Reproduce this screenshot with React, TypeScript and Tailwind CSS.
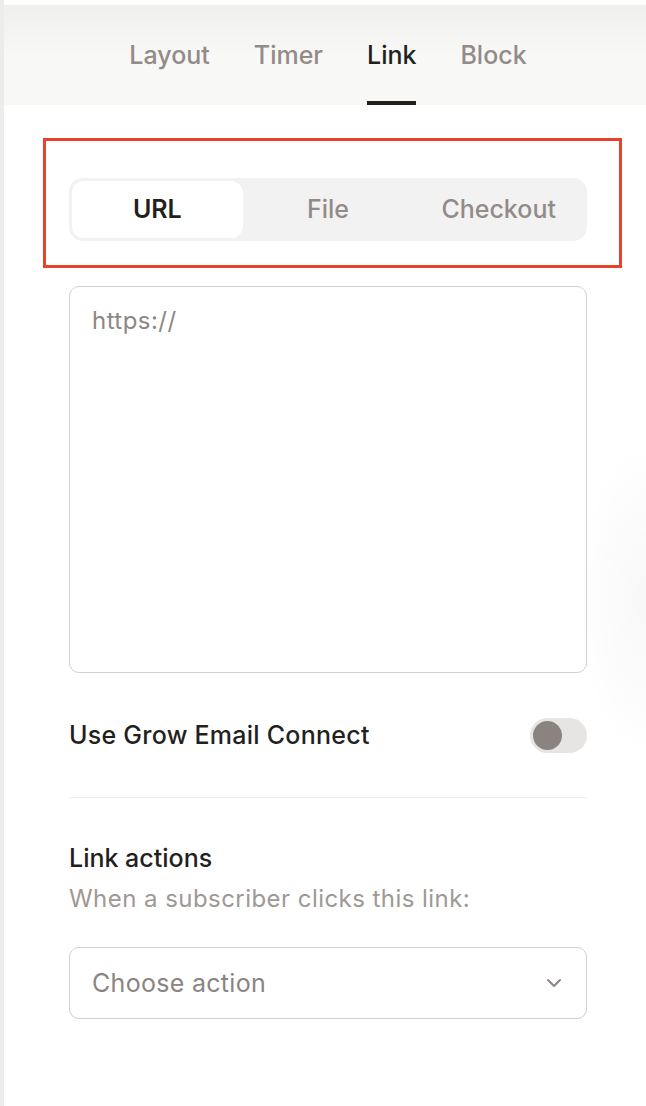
import { ChevronDown } from 'lucide-react'

const tabs = ['Layout', 'Timer', 'Link', 'Block']
const sources = ['URL', 'File', 'Checkout']

export default function App() {
  return (
    <div className="relative flex min-h-[1106px] w-[646px] overflow-hidden bg-white font-['Inter',sans-serif] text-[#231f1d]">
      <div className="w-1 shrink-0 bg-[#edecea]" />

      <div className="flex flex-1 flex-col">
        {/* Tabs */}
        <div className="mt-[5px] flex h-[100px] justify-center gap-[44px] bg-gradient-to-b from-[#efefed] via-[#f8f8f6] to-[#f8f8f6] pl-[6px]">
          {tabs.map((tab) => (
            <div
              key={tab}
              className={
                tab === 'Link'
                  ? 'flex items-center border-y-4 border-t-transparent border-b-[#231f1d] pt-[2px] text-[25px] font-medium text-[#231f1d]'
                  : 'flex items-center border-y-4 border-transparent pt-[2px] text-[25px] font-medium text-[#928b88]'
              }
            >
              {tab}
            </div>
          ))}
        </div>

        <div className="flex flex-col pl-[65px] pr-[59px] pt-[73px]">
          {/* Source switch */}
          <div className="relative">
            <div className="grid h-[63px] grid-cols-3 rounded-[14px] bg-[#f2f2f2] p-[3px]">
              {sources.map((s) => (
                <div
                  key={s}
                  className={
                    s === 'URL'
                      ? 'flex items-center justify-center rounded-[12px] bg-white text-[25px] font-semibold text-[#231f1d]'
                      : 'flex items-center justify-center text-[25px] font-medium text-[#928b88]'
                  }
                >
                  {s}
                </div>
              ))}
            </div>
            <div className="pointer-events-none absolute -bottom-[27px] -left-[26px] -right-[35px] -top-[40px] border-[3px] border-[#e8432a]" />
          </div>

          {/* URL field */}
          <div className="mt-[45px] h-[387px] rounded-[10px] border border-[#d3d0ce] px-[22px] pt-[16px] text-[24px] tracking-[0.45px] text-[#8d8683]">
            https://
          </div>

          {/* Email connect */}
          <div className="mt-[45px] flex h-[35px] items-center justify-between">
            <span className="text-[25px] font-medium tracking-[0.25px]">Use Grow Email Connect</span>
            <div className="flex h-[35px] w-[57px] items-center rounded-full bg-[#e6e5e4] px-[3px]">
              <div className="h-[29px] w-[29px] rounded-full bg-[#8b8380]" />
            </div>
          </div>

          <div className="mt-[44px] h-px bg-[#efeeed]" />

          {/* Link actions */}
          <div className="mt-[44px] text-[25px] font-medium leading-[32px]">Link actions</div>
          <div className="mt-[10px] text-[24px] leading-[30px] tracking-[0.45px] text-[#a09895]">
            When a subscriber clicks this link:
          </div>

          <div className="mt-[33px] flex h-[72px] items-center justify-between rounded-[10px] border border-[#d3d0ce] pl-[22px] pr-[20px]">
            <span className="pt-[2px] text-[25px] tracking-[0.3px] text-[#8a8482]">Choose action</span>
            <ChevronDown className="h-6 w-6 text-[#8a8482]" strokeWidth={2} />
          </div>
        </div>
      </div>

      <div className="pointer-events-none absolute right-0 top-[440px] h-[320px] w-[70px] bg-[radial-gradient(ellipse_at_right,rgba(0,0,0,0.03),transparent_70%)]" />
    </div>
  )
}
